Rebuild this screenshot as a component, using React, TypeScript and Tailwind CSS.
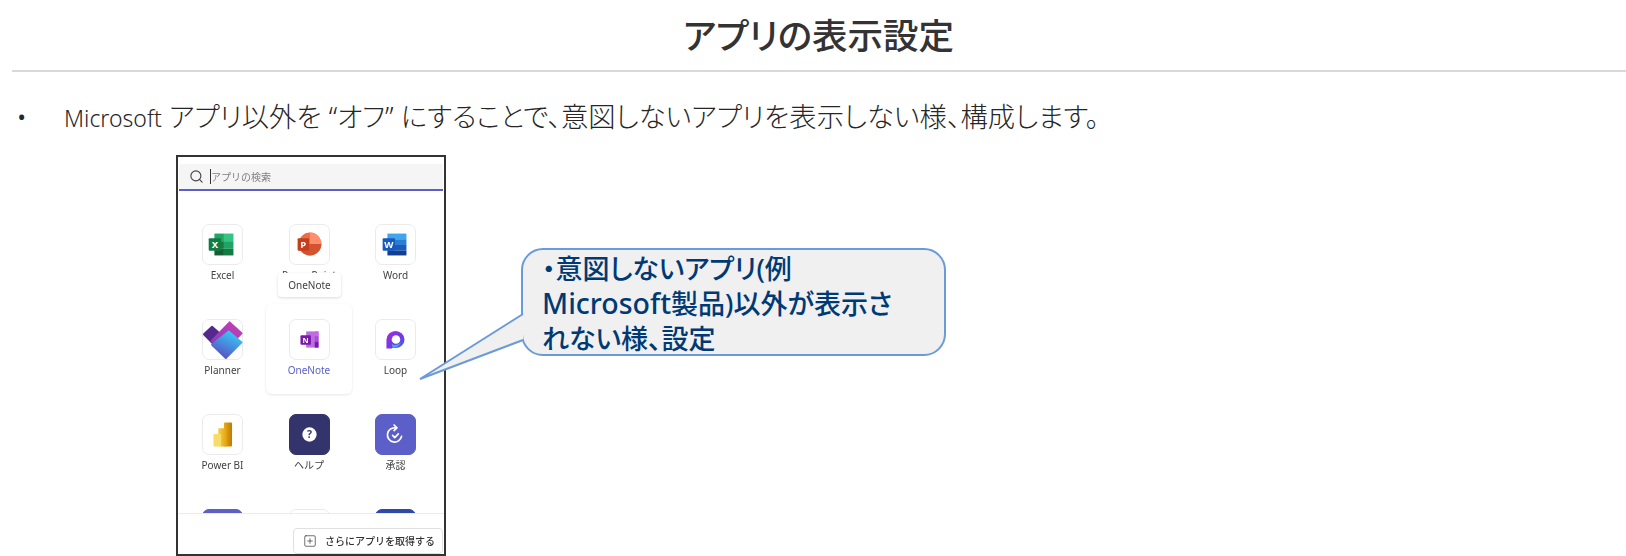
import type { ReactNode } from "react";
import { Search, SquarePlus } from "lucide-react";

const fontStack = "font-['Noto_Sans','Noto_Sans_CJK_JP',sans-serif]";

const ExcelIcon = () => (
  <svg viewBox="0 0 41 41" className="h-full w-full">
    <rect x="12" y="9" width="10" height="8" fill="#21a366" />
    <rect x="22" y="9" width="10" height="8" fill="#33c481" />
    <rect x="12" y="17" width="10" height="8" fill="#107c41" />
    <rect x="22" y="17" width="10" height="8" fill="#21a366" />
    <rect x="12" y="25" width="10" height="7" fill="#185c37" />
    <rect x="22" y="25" width="10" height="7" fill="#107c41" />
    <rect x="6" y="14" width="13" height="13" rx="1" fill="#107c41" />
    <text x="12.5" y="24.5" textAnchor="middle" fontSize="10" fontWeight="700" fill="#fff" fontFamily="Noto Sans">
      X
    </text>
  </svg>
);

const PowerPointIcon = () => (
  <svg viewBox="0 0 41 41" className="h-full w-full">
    <circle cx="21" cy="20" r="12" fill="#ed6c47" />
    <path d="M21 8a12 12 0 0 1 12 12H21Z" fill="#ff8f6b" />
    <path d="M9 20h24a12 12 0 0 1-24 0Z" fill="#d35230" />
    <rect x="8" y="14" width="12" height="13" rx="1" fill="#c43e1c" />
    <text x="14" y="24.5" textAnchor="middle" fontSize="10" fontWeight="700" fill="#fff" fontFamily="Noto Sans">
      P
    </text>
  </svg>
);

const WordIcon = () => (
  <svg viewBox="0 0 41 41" className="h-full w-full">
    <rect x="12" y="9" width="20" height="6" fill="#41a5ee" />
    <rect x="12" y="15" width="20" height="6" fill="#2b7cd3" />
    <rect x="12" y="21" width="20" height="6" fill="#185abd" />
    <rect x="12" y="27" width="20" height="5" fill="#103f91" />
    <rect x="7" y="14" width="13" height="13" rx="1" fill="#185abd" />
    <text x="13.5" y="24.5" textAnchor="middle" fontSize="10" fontWeight="700" fill="#fff" fontFamily="Noto Sans">
      W
    </text>
  </svg>
);

const PlannerIcon = () => (
  <svg viewBox="0 0 41 41" className="h-full w-full overflow-visible">
    <defs>
      <linearGradient id="plannerMid" x1="0" y1="1" x2="1" y2="0">
        <stop offset="0" stopColor="#7b3db8" />
        <stop offset="1" stopColor="#cc3fb5" />
      </linearGradient>
      <linearGradient id="plannerBlue" x1="0.8" y1="0.1" x2="0.3" y2="1">
        <stop offset="0" stopColor="#38c6f4" />
        <stop offset="1" stopColor="#5a4cc4" />
      </linearGradient>
    </defs>
    <path d="M1 15 9.500 7 22 18l-9 9.500Z" fill="#55288f" stroke="#55288f" strokeWidth="2" strokeLinejoin="round" />
    <path d="M9 22 28 2.500 40.500 14 22 33Z" fill="url(#plannerMid)" stroke="url(#plannerMid)" strokeWidth="2" strokeLinejoin="round" />
    <path d="M27 12 40.500 23.500 24 40 9.500 26Z" fill="url(#plannerBlue)" stroke="url(#plannerBlue)" strokeWidth="2" strokeLinejoin="round" />
  </svg>
);

const OneNoteIcon = () => (
  <svg viewBox="0 0 41 41" className="h-full w-full">
    <rect x="17" y="12" width="13" height="17" fill="#ba6fdc" />
    <rect x="26" y="12" width="4" height="5" fill="#ca64ea" />
    <rect x="26" y="17" width="4" height="6" fill="#ae4bd5" />
    <rect x="26" y="23" width="4" height="6" fill="#7719aa" />
    <rect x="11" y="16" width="11" height="10" rx="1" fill="#7719aa" />
    <text x="16.500" y="24" textAnchor="middle" fontSize="8" fontWeight="700" fill="#fff" fontFamily="Noto Sans">
      N
    </text>
  </svg>
);

const LoopIcon = () => (
  <svg viewBox="0 0 41 41" className="h-full w-full">
    <defs>
      <linearGradient id="loopFill" x1="0" y1="0" x2="1" y2="1">
        <stop offset="0" stopColor="#a52be0" />
        <stop offset="0.6" stopColor="#6a3be8" />
        <stop offset="1" stopColor="#3a6fe8" />
      </linearGradient>
    </defs>
    <path d="M11 30V20.500A9.500 9 0 1 1 20.500 29.500H17V30Z" fill="url(#loopFill)" />
    <circle cx="21" cy="20.500" r="4.500" fill="#fff" />
    <path d="M16.500 25c2 2 6.500 2 9.500-1.500-.5 3-4.500 6-8.500 6Z" fill="#4aa8f0" />
  </svg>
);

const PowerBiIcon = () => (
  <svg viewBox="0 0 41 41" className="h-full w-full">
    <defs>
      <linearGradient id="biTall" x1="0" y1="0" x2="1" y2="0">
        <stop offset="0" stopColor="#e6ad10" />
        <stop offset="1" stopColor="#c07a08" />
      </linearGradient>
      <linearGradient id="biMid" x1="0" y1="0" x2="1" y2="0">
        <stop offset="0" stopColor="#f6d24a" />
        <stop offset="1" stopColor="#e3a10f" />
      </linearGradient>
    </defs>
    <rect x="22" y="8" width="8.500" height="25" rx="1" fill="url(#biTall)" />
    <rect x="16" y="14" width="9" height="19" rx="1" fill="url(#biMid)" />
    <rect x="11" y="20" width="8" height="13" rx="1" fill="#f8dc6a" />
  </svg>
);

const HelpIcon = () => (
  <svg viewBox="0 0 41 41" className="h-full w-full">
    <circle cx="20.500" cy="20.500" r="7.500" fill="#fff" />
    <text x="20.500" y="24.500" textAnchor="middle" fontSize="11" fontWeight="700" fill="#33346b" fontFamily="Noto Sans">
      ?
    </text>
  </svg>
);

const ApprovalsIcon = () => (
  <svg viewBox="0 0 41 41" className="h-full w-full" fill="none" stroke="#fff" strokeWidth="1.800" strokeLinecap="round" strokeLinejoin="round">
    <path d="M19.500 13.500a7.500 7.500 0 1 0 7.500 8" transform="rotate(8 20 21)" />
    <path d="M19 10.500l3 3-3 2.800" />
    <path d="M17.500 21.500l2.200 2.200 3.800-3.800" />
  </svg>
);

type AppCell = {
  label: string;
  icon?: ReactNode;
  tile?: string;
  active?: boolean;
};

const apps: AppCell[] = [
  { label: "Excel", icon: <ExcelIcon /> },
  { label: "PowerPoint", icon: <PowerPointIcon /> },
  { label: "Word", icon: <WordIcon /> },
  { label: "Planner", icon: <PlannerIcon /> },
  { label: "OneNote", icon: <OneNoteIcon />, active: true },
  { label: "Loop", icon: <LoopIcon /> },
  { label: "Power BI", icon: <PowerBiIcon /> },
  { label: "ヘルプ", icon: <HelpIcon />, tile: "bg-[#33346b] border-[#33346b]" },
  { label: "承認", icon: <ApprovalsIcon />, tile: "bg-[#5b5fc7] border-[#5b5fc7]" },
  { label: "", tile: "bg-[#5b5fc7] border-[#5b5fc7]" },
  { label: "" },
  { label: "", tile: "bg-[#2f49a8] border-[#2f49a8]" }
];

const AppTile = ({ app }: { app: AppCell }) => (
  <div
    className={`relative flex flex-col items-center pt-[15px] ${
      app.active ? "h-[90px] rounded-md bg-white shadow-[0_1px_3px_rgba(0,0,0,0.1)]" : "h-[95px]"
    }`}
  >
    <div className={`h-[41px] w-[41px] rounded-[7px] border ${app.tile ?? "border-[#ebebeb] bg-white"}`}>
      {app.icon}
    </div>
    <span className={`mt-[3px] text-[10px] leading-[14px] ${app.active ? "text-[#5b5fc7]" : "text-[#424242]"}`}>
      {app.label}
    </span>
    {app.active ? (
      <div className="absolute left-[12px] top-[-31px] z-10 flex h-[24px] w-[63px] items-center justify-center rounded-[4px] bg-white text-[10px] text-[#424242] shadow-[0_1px_3px_rgba(0,0,0,0.15)]">
        OneNote
      </div>
    ) : null}
  </div>
);

const AppPicker = () => (
  <div className="flex h-[401px] w-[270px] shrink-0 flex-col overflow-hidden border-2 border-[#333333] bg-white">
    <div className="mx-[1px] mt-[7px] flex h-[27px] items-center rounded-t-[3px] border-b-2 border-[#5b5fc7] bg-[#f5f5f5] pl-[10px] blur-[0.3px]">
      <Search className="h-[15px] w-[15px] text-[#444444]" strokeWidth={1.8} />
      <span className="ml-[6px] h-[15px] w-[1px] bg-[#333333]" />
      <span className="text-[10px] leading-none text-[#808080]">アプリの検索</span>
    </div>
    <div className="grid flex-1 grid-cols-[87px_86px_87px] overflow-hidden pl-[1px] pt-[18px] blur-[0.3px]">
      {apps.map((app, index) => (
        <AppTile app={app} key={index} />
      ))}
    </div>
    <div className="flex h-[41px] justify-end border-t border-[#ebebeb] pr-[1px] pt-[14px]">
      <div className="flex h-[26px] w-[150px] items-center rounded-[4px] border border-[#e0e0e0] pl-[9px] text-[10px] font-medium text-[#333333] blur-[0.3px]">
        <SquarePlus className="h-[14px] w-[14px]" strokeWidth={1.2} />
        <span className="ml-[8px]">さらにアプリを取得する</span>
      </div>
    </div>
  </div>
);

const Callout = () => (
  <div className="relative ml-[75px] mt-[93px] h-[108px] w-[425px] rounded-[22px] border-2 border-[#6a9ad9] bg-[#f0f0f0] pl-[19px] text-[27px] font-medium leading-[35px] text-[#003a75] [font-feature-settings:'palt']">
    <svg className="absolute left-[-106px] top-[60px] h-[72px] w-[110px]" viewBox="0 0 110 72">
      <path d="M106 4 3 69 106 30Z" fill="#f0f0f0" />
      <path d="M106 4 3 69 106 30" fill="none" stroke="#6a9ad9" strokeWidth="2" />
    </svg>
    <p className="relative mt-[1px]">
      ・意図しないアプリ(例
      <br />
      <span className="text-[28.5px]">Microsoft</span>製品)以外が表示さ
      <br />
      れない様、設定
    </p>
  </div>
);

export default function App() {
  return (
    <div className={`h-[556px] w-[1626px] overflow-hidden bg-white text-[#262626] ${fontStack}`}>
      <header className="flex h-[70px] items-center justify-center pl-[11px] pt-[2px]">
        <h1 className="text-[35.5px] font-medium leading-none text-[#333333] [font-feature-settings:'palt']">
          アプリの表示設定
        </h1>
      </header>
      <div className="ml-[12px] h-[2px] bg-[#d9d9d9]" />
      <div className="flex h-[83px] items-center pt-[7px] text-[27.3px] font-light [font-feature-settings:'palt']">
        <span className="w-[64px] pl-[16px] text-[30px] leading-none">•</span>
        <span>
          <span className="text-[23px]">Microsoft</span> アプリ以外を “オフ” にすることで、意図しないアプリを表示しない様、構成します。
        </span>
      </div>
      <div className="flex pl-[176px]">
        <AppPicker />
        <Callout />
      </div>
    </div>
  );
}
